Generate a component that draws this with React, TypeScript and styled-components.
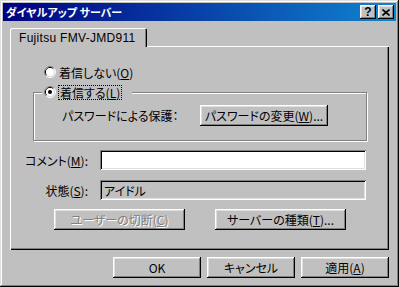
import styled, { createGlobalStyle } from "styled-components";

const JP = `"Noto Sans CJK JP", sans-serif`;

const GlobalStyle = createGlobalStyle`
  html, body {
    margin: 0;
    padding: 0;
    background: #c0c0c0;
  }
  * {
    box-sizing: border-box;
  }
`;

const Window = styled.div`
  display: flex;
  flex-direction: column;
  width: 399px;
  height: 287px;
  padding: 3px;

  font-family: ${JP};
  font-size: 12px;
  font-feature-settings: "palt";
  color: #000;

  background: #c0c0c0;
  box-shadow: inset -1px -1px #000, inset 1px 1px #dfdfdf,
    inset -2px -2px #808080, inset 2px 2px #fff;
`;

const TitleBar = styled.div`
  display: flex;
  align-items: center;
  gap: 2px;
  height: 18px;
  padding: 0 2px 0 3px;

  color: #fff;
  font-weight: bold;
  background: linear-gradient(to right, #000080, #1084d0);
`;

const TitleText = styled.div`
  flex: 1;
  font-size: 11px;
`;

const TitleButton = styled.div`
  display: flex;
  align-items: center;
  justify-content: center;
  width: 16px;
  height: 14px;

  font-family: "Liberation Sans", sans-serif;
  font-size: 12px;
  font-weight: bold;
  color: #000;

  background: #c0c0c0;
  box-shadow: inset -1px -1px #000, inset 1px 1px #fff,
    inset -2px -2px #808080, inset 2px 2px #dfdfdf;
`;

const Body = styled.div`
  display: flex;
  flex: 1;
  flex-direction: column;
  padding: 7px 7px 6px 7px;
`;

const TabStrip = styled.div`
  display: flex;
  height: 18px;
`;

const Tab = styled.div`
  position: relative;
  z-index: 1;
  width: 137px;
  height: 19px;
  padding: 3px 0 0 9px;

  font-family: "Liberation Sans", sans-serif;
  font-size: 12px;
  letter-spacing: 0.3px;

  background: #c0c0c0;
  border-radius: 2px 2px 0 0;
  box-shadow: inset 1px 1px #fff, inset -1px 0 #000, inset -2px 0 #808080;
`;

const Panel = styled.div`
  display: flex;
  flex: 1;
  flex-direction: column;
  padding-top: 19px;

  background: #c0c0c0;
  box-shadow: inset 1px 1px #fff, inset -1px -1px #000, inset -2px -2px #808080;
`;

const RadioRow = styled.label<{ $indent?: number }>`
  display: flex;
  align-items: center;
  gap: 3px;
  height: 14px;
  margin-left: ${(p) => p.$indent ?? 0}px;
  white-space: nowrap;
`;

const FocusText = styled.span`
  padding: 0 1px;
  outline: 1px dotted #000;
  line-height: 13px;
`;

const Group = styled.fieldset`
  margin: 6px 22px 0 23px;
  padding: 6px 0 14px 0;
  min-inline-size: 0;

  border: 1px solid #808080;
  box-shadow: inset 1px 1px #fff, 1px 1px #fff;
`;

const Legend = styled.legend`
  margin-left: 8px;
  padding: 0 11px 0 2px;
  background: #c0c0c0;
`;

const PasswordRow = styled.div`
  display: flex;
  align-items: center;
  padding-left: 28px;
`;

const PasswordLabel = styled.span`
  width: 138px;
  white-space: nowrap;
`;

const FieldGrid = styled.div`
  display: grid;
  grid-template-columns: 78px 1fr;
  grid-auto-rows: 20px;
  column-gap: 12px;
  row-gap: 10px;
  align-items: center;
  margin: 9px 23px 0 0;
`;

const FieldLabel = styled.span`
  justify-self: end;
  white-space: nowrap;
`;

const Field = styled.div<{ $readOnly?: boolean }>`
  display: flex;
  align-items: center;
  height: 20px;
  padding-left: 4px;

  background: ${(p) => (p.$readOnly ? "#c0c0c0" : "#fff")};
  box-shadow: inset 1px 1px #808080, inset -1px -1px #fff,
    inset 2px 2px #000, inset -2px -2px #dfdfdf;
`;

const ActionRow = styled.div`
  display: flex;
  gap: 30px;
  margin: 9px 0 0 44px;
`;

const Button = styled.button<{ $width: number }>`
  display: flex;
  align-items: center;
  justify-content: center;
  width: ${(p) => p.$width}px;
  height: 21px;
  padding: 0;

  font-family: ${JP};
  font-size: 12px;
  font-feature-settings: "palt";
  color: #000;

  background: #c0c0c0;
  border: none;
  box-shadow: inset -1px -1px #000, inset 1px 1px #fff,
    inset -2px -2px #808080, inset 2px 2px #dfdfdf;

  &:disabled {
    color: #808080;
    text-shadow: 1px 1px #fff;
  }
`;

const Footer = styled.div`
  display: flex;
  justify-content: flex-end;
  gap: 6px;
  margin-top: 7px;
`;

const Radio = ({ checked }: { checked?: boolean }) => (
  <svg width="12" height="12" viewBox="0 0 12 12">
    <path d="M2.11 9.89 A5.5 5.5 0 0 1 9.89 2.11" fill="none" stroke="#808080" />
    <path d="M9.89 2.11 A5.5 5.5 0 0 1 2.11 9.89" fill="none" stroke="#fff" />
    <path d="M2.82 9.18 A4.5 4.5 0 0 1 9.18 2.82" fill="none" stroke="#000" />
    <path d="M9.18 2.82 A4.5 4.5 0 0 1 2.82 9.18" fill="none" stroke="#dfdfdf" />
    <circle cx="6" cy="6" r="4" fill="#fff" />
    {checked && <circle cx="6" cy="6" r="2" fill="#000" />}
  </svg>
);

const CloseGlyph = () => (
  <svg width="8" height="7" viewBox="0 0 8 7">
    <path d="M0.5 0.5 L7.5 6.5 M7.5 0.5 L0.5 6.5" stroke="#000" strokeWidth="1.6" />
  </svg>
);

export default function App() {
  return (
    <>
      <GlobalStyle />
      <Window>
        <TitleBar>
          <TitleText>ダイヤルアップ サーバー</TitleText>
          <TitleButton>?</TitleButton>
          <TitleButton>
            <CloseGlyph />
          </TitleButton>
        </TitleBar>
        <Body>
          <TabStrip>
            <Tab>Fujitsu FMV-JMD911</Tab>
          </TabStrip>
          <Panel>
            <RadioRow $indent={34}>
              <Radio />
              <span>
                着信しない(<u>O</u>)
              </span>
            </RadioRow>
            <Group>
              <Legend>
                <RadioRow>
                  <Radio checked />
                  <FocusText>
                    着信する(<u>L</u>)
                  </FocusText>
                </RadioRow>
              </Legend>
              <PasswordRow>
                <PasswordLabel>パスワードによる保護：</PasswordLabel>
                <Button $width={128}>
                  パスワードの変更(<u>W</u>)...
                </Button>
              </PasswordRow>
            </Group>
            <FieldGrid>
              <FieldLabel>
                コメント(<u>M</u>):
              </FieldLabel>
              <Field />
              <FieldLabel>
                状態(<u>S</u>):
              </FieldLabel>
              <Field $readOnly>アイドル</Field>
            </FieldGrid>
            <ActionRow>
              <Button $width={131} disabled>
                ユーザーの切断(<u>C</u>)
              </Button>
              <Button $width={131}>
                サーバーの種類(<u>T</u>)...
              </Button>
            </ActionRow>
          </Panel>
          <Footer>
            <Button $width={88}>OK</Button>
            <Button $width={88}>キャンセル</Button>
            <Button $width={88}>
              適用(<u>A</u>)
            </Button>
          </Footer>
        </Body>
      </Window>
    </>
  );
}
